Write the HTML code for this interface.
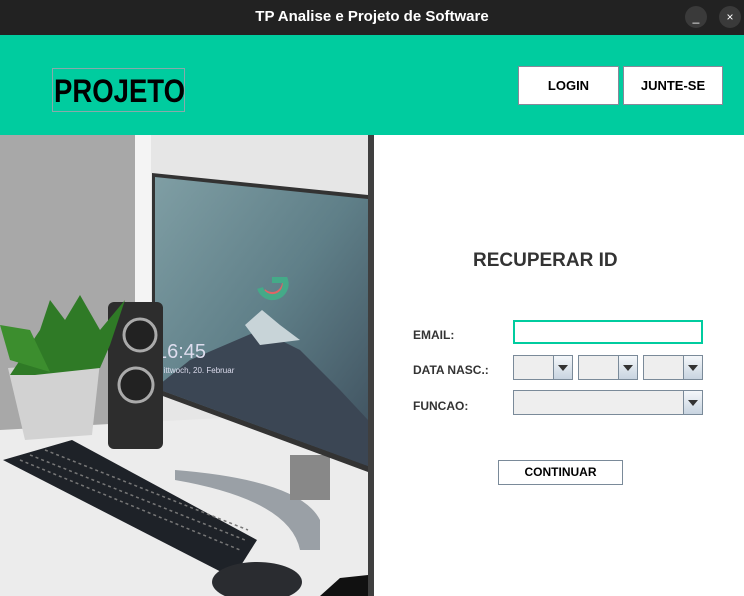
<!DOCTYPE html>
<html><head><meta charset="utf-8"><style>
*{margin:0;padding:0;box-sizing:border-box}
body{width:744px;height:596px;overflow:hidden;background:#fff;font-family:"Liberation Sans",sans-serif;position:relative}
.tb{position:absolute;left:0;top:0;width:744px;height:35px;background:#222;color:#fff;font-size:15px;font-weight:bold;text-align:center;line-height:33px}
.cb{position:absolute;top:6px;width:22px;height:22px;border-radius:50%;background:#3a3a3a;color:#fff;font-size:12px;line-height:22px;text-align:center;font-weight:normal}
.hd{position:absolute;left:0;top:35px;width:744px;height:100px;background:#00cc9f}
.logo{position:absolute;left:52px;top:33px;width:133px;height:44px;border:1px solid #8aa;color:#000}
.logo span{position:absolute;left:1px;top:0;font-size:32px;font-weight:bold;line-height:45px;transform:scaleX(0.86);transform-origin:left center;white-space:nowrap}
.btn{position:absolute;top:31px;height:39px;background:#fff;border:1px solid #889;font-size:13px;font-weight:bold;text-align:center;line-height:37px}
.lbl{position:absolute;left:413px;font-size:12px;font-weight:bold;color:#333}
.cmb{position:absolute;height:25px;border:1px solid #7a8a99;background:#eee}
.cmb .ar{position:absolute;right:0;top:0;bottom:0;width:19px;border-left:1px solid #7a8a99;background:linear-gradient(#f4f7fa,#c8d4e0)}
.cmb .ar:after{content:"";position:absolute;left:4px;top:9px;border-left:5px solid transparent;border-right:5px solid transparent;border-top:6px solid #333}
</style></head><body>
<div class="tb">TP Analise e Projeto de Software<div class="cb" style="left:685px">_</div><div class="cb" style="left:719px">×</div></div>
<div class="hd"><div class="logo"><span>PROJETO</span></div>
<div class="btn" style="left:518px;width:101px">LOGIN</div>
<div class="btn" style="left:623px;width:100px">JUNTE-SE</div></div>
<svg style="position:absolute;left:0;top:135px" width="374" height="461" viewBox="0 135 374 461">
<rect x="0" y="135" width="368" height="461" fill="#dcdcdc"/>
<rect x="0" y="135" width="135" height="300" fill="#a8a8a8"/>
<rect x="135" y="135" width="16" height="300" fill="#f4f4f4"/>
<rect x="151" y="135" width="217" height="300" fill="#e6e6e6"/>
<polygon points="0,430 368,410 368,596 0,596" fill="#ececec"/>
<path d="M175 470 Q300 480 320 520 L320 550 L300 550 Q290 500 175 480Z" fill="#9aa0a6"/>
<rect x="290" y="455" width="40" height="45" fill="#888"/>
<defs><linearGradient id="sc" x1="0" y1="0" x2="1" y2="1"><stop offset="0" stop-color="#7f9ea4"/><stop offset=".5" stop-color="#5f7f88"/><stop offset="1" stop-color="#3d4e5c"/></linearGradient></defs>
<polygon points="152,173 368,195 368,472 152,392" fill="#333"/>
<polygon points="155,177 368,199 368,466 155,388" fill="url(#sc)"/>
<polygon points="190,360 260,330 300,350 340,390 368,420 368,466 155,388" fill="#3b4654"/>
<path d="M245 325 L262 310 L280 325 L300 340 L260 345Z" fill="#c8d4d8"/>
<circle cx="272" cy="282" r="13" fill="none" stroke="#d66" stroke-width="6" stroke-dasharray="30 60"/>
<path d="M272 280 h13 a13 13 0 0 1 -25 8" fill="none" stroke="#4a8" stroke-width="6"/>
<text x="156" y="358" font-size="20" fill="#dde" font-family="Liberation Sans">16:45</text>
<text x="157" y="373" font-size="8" fill="#dde" font-family="Liberation Sans">Mittwoch, 20. Februar</text>
<rect x="108" y="302" width="55" height="147" rx="6" fill="#2d2d2d"/>
<circle cx="140" cy="335" r="16" fill="#222" stroke="#aaa" stroke-width="3"/>
<circle cx="136" cy="385" r="17" fill="#222" stroke="#aaa" stroke-width="3"/>
<path d="M8 368 L100 362 L92 435 L25 440Z" fill="#d2d2d2"/>
<path d="M10 375 L40 330 L50 300 L65 320 L80 295 L100 330 L125 300 L110 345 L100 368 L35 375Z" fill="#2f7a26"/>
<path d="M0 325 L30 330 L50 372 L10 360Z" fill="#3c8e2e"/>
<polygon points="3,460 72,440 257,540 233,578" fill="#1e2228"/>
<g stroke="#777" stroke-width="1.5" stroke-dasharray="3 3"><path d="M20 460 L240 550M30 455 L245 540M45 450 L248 530"/></g>
<ellipse cx="257" cy="582" rx="45" ry="20" fill="#2a2c30"/>
<path d="M320 596 L340 578 L368 575 L368 596Z" fill="#111"/>
<rect x="368" y="135" width="6" height="461" fill="#3f3f3f"/>
</svg>
<div style="position:absolute;left:473px;top:250px;font-size:19px;font-weight:bold;color:#333">RECUPERAR ID</div>
<div class="lbl" style="top:328px">EMAIL:</div>
<div class="lbl" style="top:363px">DATA NASC.:</div>
<div class="lbl" style="top:399px">FUNCAO:</div>
<div style="position:absolute;left:513px;top:320px;width:190px;height:24px;border:2px solid #00cc9f;background:#fff"></div>
<div class="cmb" style="left:513px;top:355px;width:60px"><div class="ar"></div></div>
<div class="cmb" style="left:578px;top:355px;width:60px"><div class="ar"></div></div>
<div class="cmb" style="left:643px;top:355px;width:60px"><div class="ar"></div></div>
<div class="cmb" style="left:513px;top:390px;width:190px"><div class="ar"></div></div>
<div style="position:absolute;left:498px;top:460px;width:125px;height:25px;border:1px solid #7a8a99;background:#fff;font-size:12px;font-weight:bold;text-align:center;line-height:23px">CONTINUAR</div>
</body></html>
